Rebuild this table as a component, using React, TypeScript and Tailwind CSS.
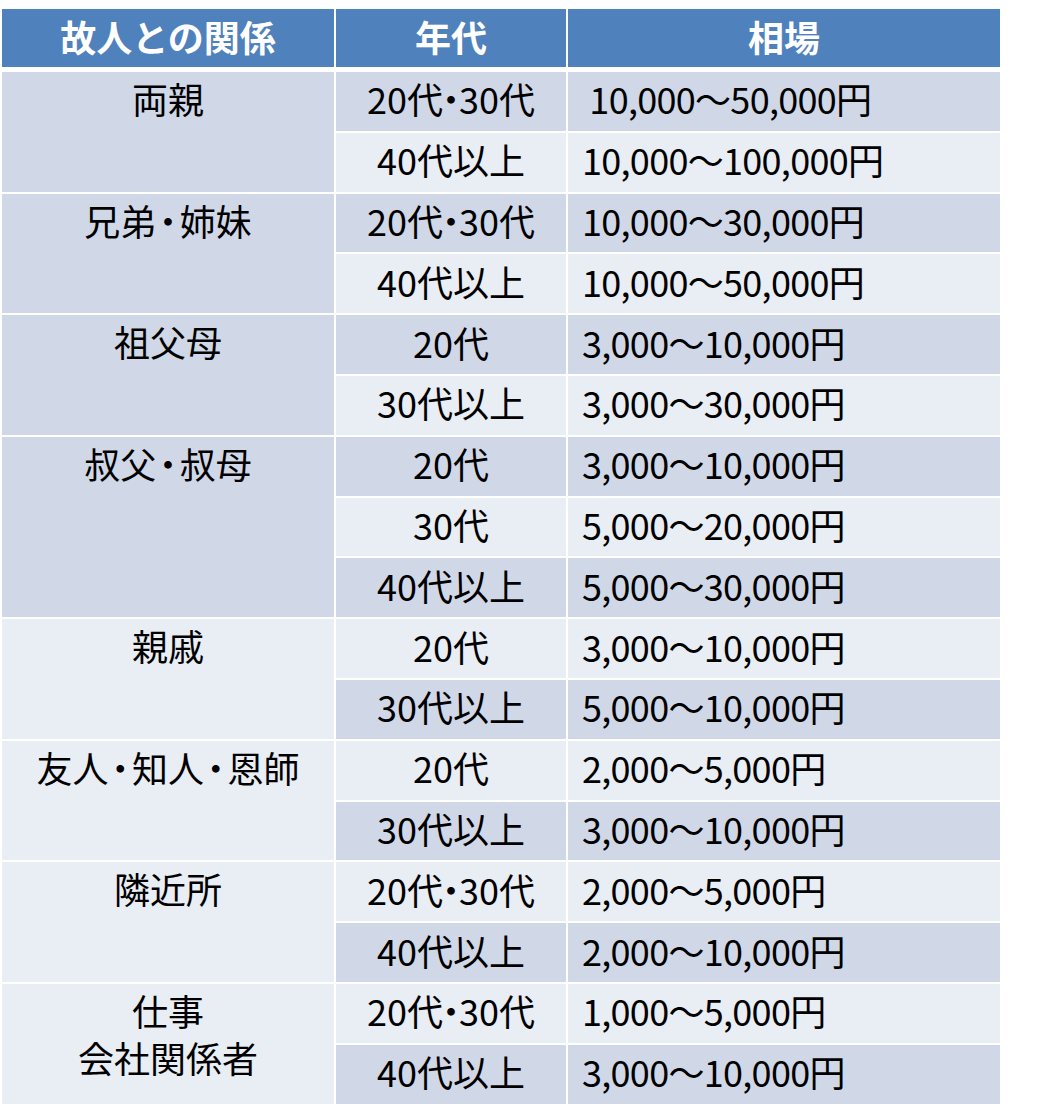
import React from "react";

type Row = [string, string];
type Group = { name: string[]; dark: boolean; rows: Row[] };

const groups: Group[] = [
  { name: ["両親"], dark: true, rows: [["20代・30代", " 10,000〜50,000円"], ["40代以上", "10,000〜100,000円"]] },
  { name: ["兄弟・姉妹"], dark: true, rows: [["20代・30代", "10,000〜30,000円"], ["40代以上", "10,000〜50,000円"]] },
  { name: ["祖父母"], dark: true, rows: [["20代", "3,000〜10,000円"], ["30代以上", "3,000〜30,000円"]] },
  {
    name: ["叔父・叔母"],
    dark: true,
    rows: [["20代", "3,000〜10,000円"], ["30代", "5,000〜20,000円"], ["40代以上", "5,000〜30,000円"]],
  },
  { name: ["親戚"], dark: false, rows: [["20代", "3,000〜10,000円"], ["30代以上", "5,000〜10,000円"]] },
  { name: ["友人・知人・恩師"], dark: false, rows: [["20代", "2,000〜5,000円"], ["30代以上", "3,000〜10,000円"]] },
  { name: ["隣近所"], dark: false, rows: [["20代・30代", "2,000〜5,000円"], ["40代以上", "2,000〜10,000円"]] },
  { name: ["仕事", "会社関係者"], dark: false, rows: [["20代・30代", "1,000〜5,000円"], ["40代以上", "3,000〜10,000円"]] },
];

// the middle dot in the original is narrow, so squeeze it into part of a cell
function Label({ text, wide }: { text: string; wide?: boolean }) {
  const parts = text.split("・");
  return (
    <>
      {parts.map((p, i) => (
        <React.Fragment key={i}>
          {i > 0 && (
            <span className={(wide ? "w-[0.65em]" : "w-[0.45em]") + " inline-flex justify-center"}>・</span>
          )}
          {p}
        </React.Fragment>
      ))}
    </>
  );
}

function App() {
  let idx = 0;
  return (
    <div className="min-h-screen bg-white pt-[9px] pl-[2px] font-['Noto_Sans_CJK_JP','Noto_Sans',sans-serif] text-[36px] text-black">
      <div className="grid grid-cols-[332px_230px_432px] gap-x-[2px] h-[57px] mb-[6px] text-white font-bold">
        <div className="bg-[#4f81bd] flex items-center justify-center pb-[4px]">故人との関係</div>
        <div className="bg-[#4f81bd] flex items-center justify-center pb-[4px]">年代</div>
        <div className="bg-[#4f81bd] flex items-center justify-center pb-[4px]">相場</div>
      </div>

      <div className="grid grid-cols-[332px_230px_432px] auto-rows-[58.8px] gap-[2px]">
        {groups.map((g, gi) => (
          <React.Fragment key={gi}>
            <div
              className={
                (g.rows.length === 3 ? "row-span-3 " : "row-span-2 ") +
                (g.dark ? "bg-[#d0d8e8] " : "bg-[#e9edf4] ") +
                "flex flex-col items-center pt-[3px] leading-[47px]"
              }
            >
              {g.name.map((n) => (
                <div key={n}>
                  <Label text={n} wide />
                </div>
              ))}
            </div>
            {g.rows.map((r, ri) => {
              const dark = idx++ % 2 === 0;
              const bg = dark ? "bg-[#d0d8e8]" : "bg-[#e9edf4]";
              return (
                <React.Fragment key={ri}>
                  <div className={bg + " col-start-2 flex items-center justify-center pb-[6px]"}>
                    <Label text={r[0]} />
                  </div>
                  <div className={bg + " flex items-center pl-[14px] pb-[6px] whitespace-pre tracking-[-0.7px]"}>
                    {r[1]}
                  </div>
                </React.Fragment>
              );
            })}
          </React.Fragment>
        ))}
      </div>
    </div>
  );
}

export default App;
